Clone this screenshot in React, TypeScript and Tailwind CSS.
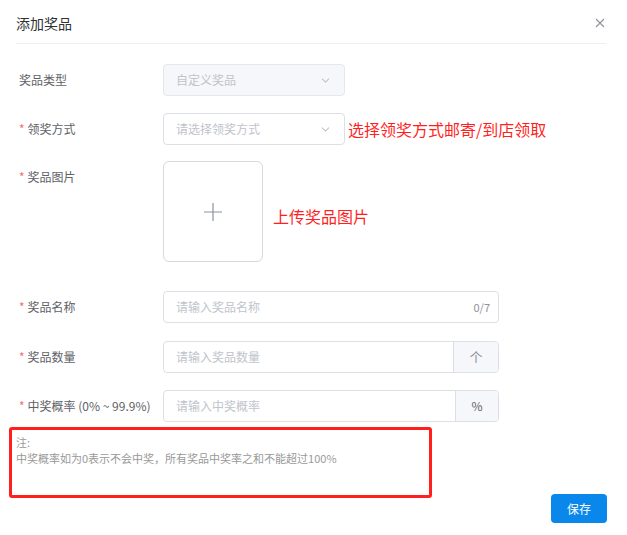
import { ChevronDown } from "lucide-react";

const font = { fontFamily: '"Noto Sans CJK SC", "Noto Sans", sans-serif' };

function Label({ text, required }: { text: string; required?: boolean }) {
  return (
    <div className="w-[163px] shrink-0 pl-[19px] h-8 flex items-center text-[12px] text-[#606266]">
      {required && <span className="text-[#f56c6c] mr-[3px]">*</span>}
      <span>{text}</span>
    </div>
  );
}

export default function App() {
  return (
    <div className="w-[627px] h-[535px] bg-white relative overflow-hidden" style={font}>
      {/* HEADER */}
      <div className="ml-4 mr-[21px] h-[44px] pt-[3px] flex items-center justify-between border-b border-[#ebeef5]">
        <span className="text-[14px] text-[#303133]">添加奖品</span>
        <svg width="10" height="10" viewBox="0 0 10 10" className="mr-[1px]">
          <path d="M1 1L9 9M9 1L1 9" stroke="#909399" strokeWidth="1.1" />
        </svg>
      </div>

      {/* BODY */}
      <div className="mt-5">
        <div className="flex">
          <Label text="奖品类型" />
          <div className="w-[182px] h-8 rounded border border-[#e4e7ed] bg-[#f5f7fa] flex items-center justify-between px-3 text-[12px] text-[#c0c4cc]">
            <span>自定义奖品</span>
            <ChevronDown size={13} color="#c0c4cc" />
          </div>
        </div>

        <div className="flex mt-[17px] items-center">
          <Label text="领奖方式" required />
          <div className="w-[182px] h-8 rounded border border-[#dcdfe6] bg-white flex items-center justify-between px-3 text-[12px] text-[#c0c4cc]">
            <span>请选择领奖方式</span>
            <ChevronDown size={13} color="#c0c4cc" />
          </div>
          <span className="ml-[3px] text-[16px] text-[#ff1f1f]">选择领奖方式邮寄/到店领取</span>
        </div>

        <div className="flex mt-4">
          <Label text="奖品图片" required />
          <div className="w-[100px] h-[101px] rounded-md border border-[#d9d9d9] flex items-center justify-center">
            <svg width="20" height="20" viewBox="0 0 20 20">
              <path d="M10 1V19M1 10H19" stroke="#8c939d" strokeWidth="1.2" />
            </svg>
          </div>
          <span className="ml-[10px] mt-[44px] text-[16px] text-[#ff1f1f] leading-[22px]">上传奖品图片</span>
        </div>

        <div className="flex mt-[29px]">
          <Label text="奖品名称" required />
          <div className="w-[336px] h-8 rounded border border-[#dcdfe6] flex items-center justify-between pl-3 pr-[8px] text-[12px]">
            <span className="text-[#c0c4cc]">请输入奖品名称</span>
            <span className="text-[11px] text-[#909399]">0/7</span>
          </div>
        </div>

        <div className="flex mt-[18px]">
          <Label text="奖品数量" required />
          <div className="w-[336px] h-8 rounded border border-[#dcdfe6] flex text-[12px] overflow-hidden">
            <div className="flex-1 flex items-center pl-3 text-[#c0c4cc]">请输入奖品数量</div>
            <div className="w-[45px] bg-[#f5f7fa] border-l border-[#dcdfe6] flex items-center justify-center text-[13px] text-[#909399]">个</div>
          </div>
        </div>

        <div className="flex mt-[17px]">
          <Label text="中奖概率 (0% ~ 99.9%)" required />
          <div className="w-[336px] h-8 rounded border border-[#dcdfe6] flex text-[12px] overflow-hidden">
            <div className="flex-1 flex items-center pl-3 text-[#c0c4cc]">请输入中奖概率</div>
            <div className="w-[43px] bg-[#f5f7fa] border-l border-[#dcdfe6] flex items-center justify-center text-[#606266]">%</div>
          </div>
        </div>

        {/* NOTE + SAVE */}
        <div className="flex mt-[5px] mr-[20px]">
          <div className="ml-[9px] w-[423px] h-[71px] border-[3px] border-[#ff1f1f] rounded-[3px] pl-[4px] pt-[4px] text-[11px] leading-[16px] text-[#999999]">
            <div>注:</div>
            <div>中奖概率如为0表示不会中奖，所有奖品中奖率之和不能超过100%</div>
          </div>
          <button className="ml-auto mt-[67px] w-[56px] h-[29px] rounded bg-[#0a87ea] text-white text-[12px]">
            保存
          </button>
        </div>
      </div>
    </div>
  );
}
